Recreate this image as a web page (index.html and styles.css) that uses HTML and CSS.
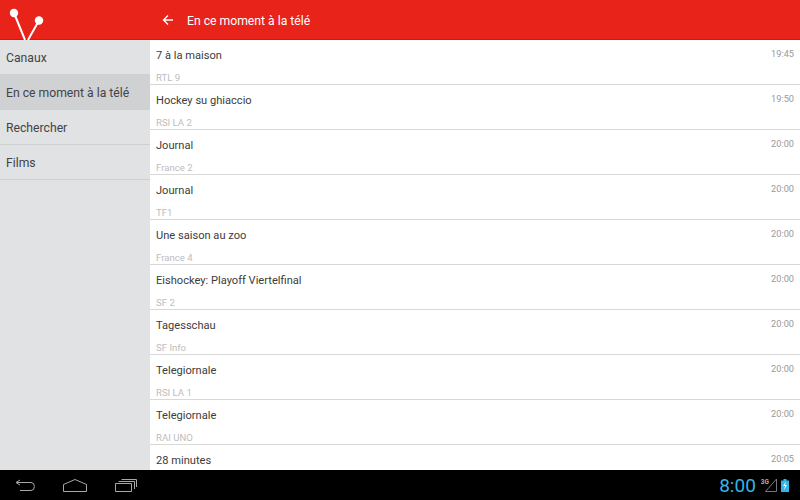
FILE: index.html
```html
<!DOCTYPE html>
<html>
<head>
  <title>En ce moment à la télé</title>
  <link rel="stylesheet" href="styles.css">
</head>
<body>
  <div class="app">
    <header class="action-bar">
      <div class="logo-area">
        <svg class="logo" width="60" height="40" viewBox="0 0 60 40">
          <path d="M14 13 L25 40 M39 20.5 L28 40" stroke="#fff" stroke-width="2" fill="none"/>
          <circle cx="14" cy="13" r="4.2" fill="#fff"/>
          <circle cx="39" cy="20.5" r="4.2" fill="#fff"/>
        </svg>
      </div>
      <svg class="back" width="12" height="12" viewBox="0 0 12 12">
        <path d="M11 6 H2 M6 1.5 L1.5 6 L6 10.5" stroke="#fff" stroke-width="1.3" fill="none"/>
      </svg>
      <span class="title">En ce moment à la télé</span>
    </header>
    <div class="main">
      <nav class="sidebar">
        <div class="nav-item">Canaux</div>
        <div class="nav-item active">En ce moment à la télé</div>
        <div class="nav-item">Rechercher</div>
        <div class="nav-item">Films</div>
      </nav>
      <div class="list">
        <div class="row"><div class="row-top"><span class="name">7 à la maison</span><span class="time">19:45</span></div><div class="channel">RTL 9</div></div>
        <div class="row"><div class="row-top"><span class="name">Hockey su ghiaccio</span><span class="time">19:50</span></div><div class="channel">RSI LA 2</div></div>
        <div class="row"><div class="row-top"><span class="name">Journal</span><span class="time">20:00</span></div><div class="channel">France 2</div></div>
        <div class="row"><div class="row-top"><span class="name">Journal</span><span class="time">20:00</span></div><div class="channel">TF1</div></div>
        <div class="row"><div class="row-top"><span class="name">Une saison au zoo</span><span class="time">20:00</span></div><div class="channel">France 4</div></div>
        <div class="row"><div class="row-top"><span class="name">Eishockey: Playoff Viertelfinal</span><span class="time">20:00</span></div><div class="channel">SF 2</div></div>
        <div class="row"><div class="row-top"><span class="name">Tagesschau</span><span class="time">20:00</span></div><div class="channel">SF Info</div></div>
        <div class="row"><div class="row-top"><span class="name">Telegiornale</span><span class="time">20:00</span></div><div class="channel">RSI LA 1</div></div>
        <div class="row"><div class="row-top"><span class="name">Telegiornale</span><span class="time">20:00</span></div><div class="channel">RAI UNO</div></div>
        <div class="row"><div class="row-top"><span class="name">28 minutes</span><span class="time">20:05</span></div></div>
      </div>
    </div>
    <footer class="system-bar">
      <div class="nav-buttons">
        <svg width="20" height="13" viewBox="0 0 20 13">
          <path d="M5 1 L1 3.5 L5 6 M1.5 3.5 H16 Q19.4 3.5 19.4 7.5 Q19.4 11.5 16 11.5 H5" stroke="#a8a8a8" stroke-width="1" fill="none"/>
        </svg>
        <svg width="24" height="13" viewBox="0 0 24 13">
          <path d="M.5 5.5 L12 .5 L23.5 5.5 V12.5 H.5 Z" stroke="#a8a8a8" stroke-width="1" fill="none"/>
        </svg>
        <svg width="22" height="13" viewBox="0 0 22 13">
          <path d="M.5 4.5 H16.5 V12.5 H.5 Z M3.5 2.5 H19.5 V10 M6.5 .5 H21.5 V8" stroke="#a8a8a8" stroke-width="1" fill="none"/>
        </svg>
      </div>
      <div class="status">
        <span class="clock">8:00</span>
        <span class="signal">
          <span class="net">3G</span>
          <svg class="bars" width="12" height="14" viewBox="0 0 12 14">
            <path d="M11.5 1 V13.5 H.5 Z" stroke="#777" stroke-width="1" fill="none"/>
          </svg>
        </span>
        <svg class="battery" width="8" height="13" viewBox="0 0 8 13">
          <path d="M2.5 0 H5.5 V1.5 H8 V13 H0 V1.5 H2.5 Z" fill="#33b5e5"/>
          <path d="M5 2.5 L2 7 H4 L3 11 L6 6 H4 Z" fill="#fff"/>
        </svg>
      </div>
    </footer>
  </div>
</body>
</html>
```

FILE: styles.css
```css
body {
  margin: 0;
  font-family: Roboto, sans-serif;
  background-color: #fff;
}

.app {
  display: flex;
  flex-direction: column;
  width: 800px;
  height: 500px;
  overflow: hidden;
}

.action-bar {
  display: flex;
  align-items: center;
  flex: 0 0 40px;
  box-sizing: border-box;
  height: 40px;
  background-color: #e8231a;
  border-bottom: 1px solid #cc1a12;
  color: #fff;
}

.logo-area {
  width: 150px;
  height: 40px;
  flex-shrink: 0;
}

.logo {
  display: block;
}

.back {
  margin-left: 12px;
}

.title {
  margin-left: 13px;
  padding-top: 2px;
  font-size: 12.2px;
}

.main {
  display: flex;
  flex: 1;
  min-height: 0;
}

.sidebar {
  width: 150px;
  flex-shrink: 0;
  background-color: #e1e2e4;
}

.nav-item {
  box-sizing: border-box;
  height: 35px;
  padding: 0 6px;
  line-height: 36px;
  font-size: 12.2px;
  color: #444;
  border-bottom: 1px solid #cfd0d2;
}

.nav-item.active {
  background-color: #d0d1d3;
}

.list {
  flex: 1;
  min-width: 0;
  overflow: hidden;
}

.row {
  box-sizing: border-box;
  height: 45px;
  padding: 0 6px;
  border-bottom: 1px solid #d8d8d8;
}

.row-top {
  display: flex;
  justify-content: space-between;
  height: 30px;
}

.name {
  margin-top: 8px;
  font-size: 11.1px;
  line-height: 15px;
  color: #3c3c3c;
}

.time {
  margin-top: 7px;
  font-size: 9.2px;
  line-height: 13px;
  color: #999;
}

.channel {
  margin-top: 2px;
  font-size: 9.6px;
  line-height: 12px;
  color: #bdbdbd;
}

.system-bar {
  display: flex;
  align-items: center;
  justify-content: space-between;
  flex: 0 0 30px;
  background-color: #000;
}

.nav-buttons {
  display: flex;
  align-items: center;
  gap: 28px;
  padding-left: 15px;
}

.status {
  display: flex;
  align-items: center;
  padding-right: 11px;
}

.clock {
  font-size: 19px;
  color: #33b5e5;
}

.signal {
  display: flex;
  align-items: flex-start;
  margin-left: 5px;
}

.net {
  font-size: 6.5px;
  line-height: 8px;
  font-weight: bold;
  color: #aaa;
}

.bars {
  margin-left: -4px;
}

.battery {
  margin-left: 4px;
}
```
